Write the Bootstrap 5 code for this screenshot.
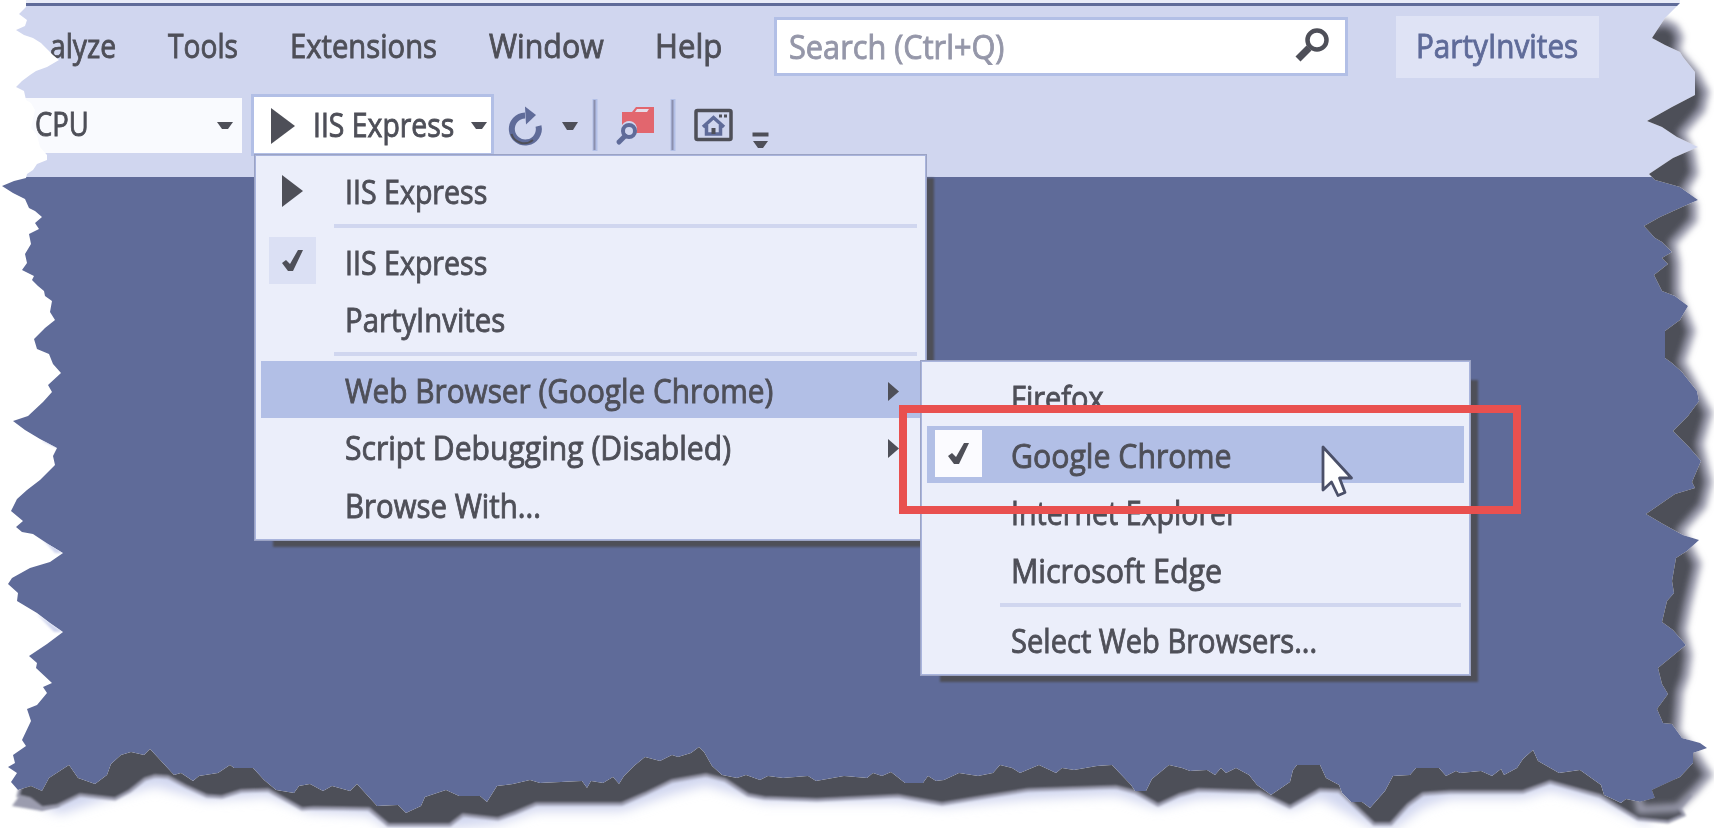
<!DOCTYPE html>
<html lang="en">
<head>
<meta charset="utf-8">
<meta name="viewport" content="width=device-width, initial-scale=1">
<title>PartyInvites</title>
<link href="https://cdn.jsdelivr.net/npm/bootstrap@5.3.0/dist/css/bootstrap.min.css" rel="stylesheet">
<style>
:root{--ink:#4e4f58;--slate:#5f6b99;--bar:#d0d6ef;--panel:#ebeefa;--hot:#b2bfe6;--red:#e9504f}
body{width:1725px;height:828px;overflow:hidden;background:var(--slate);color:var(--ink);font-family:"Open Sans","Noto Sans",sans-serif;font-size:33px;line-height:57.5px}
.fit{display:inline-block;white-space:pre;transform-origin:0 50%;flex:none;padding-top:1px;-webkit-text-stroke:.9px currentColor}
.shell{height:177px;background:var(--bar);border-top:3px solid #e9ecf8}
.shell::before{content:"";display:block;height:3px;background:var(--slate)}
.menus{height:88px;padding:10px 0 0 50px}
.menus>*{flex:none}
.searchbox{width:574px;height:59px;margin:1px 0 0 52px;border:3px solid var(--hot);background:#fff;color:#9597a9;padding-left:12px;line-height:51px}
.solution{width:203px;height:62px;margin-left:48px;padding-left:20px;background:#dfe3f5;color:var(--slate)}
.tools{height:62px}
.tools>*{flex:none}
.platform{width:242px;height:55px;margin:4px 9px 0 0;padding-left:35px;background:#f9fafe;line-height:50px}
.runbtn{width:243px;height:62px;border:3px solid var(--hot);background:#fff;line-height:54px;padding-left:59px}
.drop{width:673px;height:387px;left:254px;top:154px;z-index:2}
.sub{width:551px;height:316px;left:920px;top:360px;z-index:3}
.flyout{background:var(--panel);border:2px solid #a9b4dc;padding:6px 5px;outline:1px solid #9ba3c4;outline-offset:-1px}
.flyout .entry{height:57.5px;padding-left:84px;position:relative}
.flyout .entry.hot{background:var(--hot)}
.flyout .rule{height:4px;margin:4.5px 3px 4.5px 73px;background:var(--bar)}
.shade{background:var(--ink);z-index:1;filter:blur(1px)}
.tick{left:8px;top:4.5px;width:47px;height:47px;background:#dbe0f4}
.hot .tick{background:#fbfbff}
.over{position:absolute}
.callout{left:899px;top:405px;width:622px;height:109px;border:8px solid var(--red);z-index:5}
</style>
</head>
<body class="position-relative">
<header class="shell">
  <nav class="menus d-flex align-items-start">
    <span class="fit" data-w="66">alyze</span>
    <span class="fit" data-w="70" style="margin-left:52px">Tools</span>
    <span class="fit" data-w="147" style="margin-left:52px">Extensions</span>
    <span class="fit" data-w="115" style="margin-left:52px">Window</span>
    <span class="fit" data-w="67" style="margin-left:51px">Help</span>
    <div class="searchbox d-flex"><span class="fit" data-w="215">Search (Ctrl+Q)</span>
      <svg class="ms-auto" width="40" height="44" style="margin-right:15px" viewBox="0 0 40 44" fill="none" stroke="#4e4f58"><circle cx="27" cy="20" r="9.500" stroke-width="4.500"/><path d="M19 28L8 39" stroke-width="7"/></svg>
    </div>
    <div class="solution"><span class="fit" data-w="162">PartyInvites</span></div>
  </nav>
  <div class="tools d-flex align-items-start">
    <div class="platform d-flex"><span class="fit" data-w="54">CPU</span>
      <svg class="ms-auto" width="16" height="50" style="margin-right:9px"><path d="M0 24h16l-5 7h-6z" fill="#4e4f58"/></svg></div>
    <div class="runbtn position-relative d-flex"><svg class="over" style="left:17px;top:10px" width="24" height="38"><path d="M0 1L24 19L0 37z" fill="#4e4f58"/></svg><span class="fit" data-w="141">IIS Express</span>
      <svg class="ms-auto" width="16" height="50" style="margin-right:4px"><path d="M0 25h16l-5 7h-6z" fill="#4e4f58"/></svg></div>
    <svg width="286" height="60" viewBox="494 94 286 60" fill="none">
      <path d="M525 115.500A13.500 13.500 0 1 0 538.500 126" stroke="#5f6b99" stroke-width="6"/><path d="M525 106.500l11 8.500l-10 9.500z" fill="#5f6b99"/><path d="M511.500 134A13.500 13.500 0 0 0 533 140" stroke="#4e4f58" stroke-width="2"/>
      <path d="M562 122h16l-5 8h-6z" fill="#4e4f58"/>
      <path d="M595 99v52M673 99v52" stroke="#b2bfe6" stroke-width="5"/><path d="M594.500 100v50M672.500 100v50" stroke="#8b90ad" stroke-width="2"/>
      <path d="M622 112h10l4-5h18v26h-18a8 8 0 0 0-14-8z" fill="#e2666e"/><path d="M637 109h12l-2 3h-12z" fill="#e5dce9"/>
      <circle cx="629" cy="131" r="6" stroke="#5f6b99" stroke-width="4" fill="#d0d6ef"/><path d="M625 136l-6 6" stroke="#5f6b99" stroke-width="5" stroke-linecap="round"/>
      <rect x="696" y="110.500" width="35" height="29" rx="1.500" stroke="#4e4f58" stroke-width="3.500"/><path d="M703 127l10.500-9.500l10.500 9.500M706.500 125v9h14v-9" stroke="#5f6b99" stroke-width="3.500"/><path d="M711.500 134v-6h4v6z" fill="#4e4f58"/><path d="M719 116h3m2 0h3" stroke="#4e4f58" stroke-width="3"/>
      <path d="M752.500 132.500h16v4h-16zM753 141h15l-5 7h-5z" fill="#4e4f58"/>
    </svg>
  </div>
</header>

<div class="over shade" style="left:273px;top:178px;width:661px;height:369px"></div>
<div class="over flyout drop">
  <div class="entry"><svg class="over" style="left:21px;top:13px" width="21" height="32"><path d="M0 0L21 16L0 32z" fill="#4e4f58"/></svg><span class="fit" data-w="142">IIS Express</span></div>
  <div class="rule"></div>
  <div class="entry"><span class="over tick"><svg class="d-block" width="47" height="47" viewBox="0 0 47 47"><path d="M13 26l4-3 4 4 8-14h5L24 34h-5z" fill="#4e4f58"/></svg></span><span class="fit" data-w="142">IIS Express</span></div>
  <div class="entry"><span class="fit" data-w="160">PartyInvites</span></div>
  <div class="rule"></div>
  <div class="entry hot"><span class="fit" data-w="428">Web Browser (Google Chrome)</span><svg class="over" style="left:627px;top:21px" width="11" height="19"><path d="M0 0L11 9.500L0 19z" fill="#4e4f58"/></svg></div>
  <div class="entry"><span class="fit" data-w="386">Script Debugging (Disabled)</span><svg class="over" style="left:627px;top:21px" width="11" height="19"><path d="M0 0L11 9.500L0 19z" fill="#4e4f58"/></svg></div>
  <div class="entry"><span class="fit" data-w="196">Browse With...</span></div>
</div>

<div class="over shade" style="left:940px;top:380px;width:538px;height:302px;z-index:2"></div>
<div class="over flyout sub">
  <div class="entry"><span class="fit" data-w="93">Firefox</span></div>
  <div class="entry hot"><span class="over tick"><svg class="d-block" width="47" height="47" viewBox="0 0 47 47"><path d="M13 26l4-3 4 4 8-14h5L24 34h-5z" fill="#4e4f58"/></svg></span><span class="fit" data-w="221">Google Chrome</span></div>
  <div class="entry"><span class="fit" data-w="227">Internet Explorer</span></div>
  <div class="entry"><span class="fit" data-w="211">Microsoft Edge</span></div>
  <div class="rule"></div>
  <div class="entry"><span class="fit" data-w="306">Select Web Browsers...</span></div>
</div>
<div class="over callout"></div>
<svg class="over" style="left:1320px;top:443px;z-index:6" width="38" height="56"><path d="M3 4V47L11.500 39L18 52.500L25 49.500L19.500 35H31.500z" fill="#fff" stroke="#4b5069" stroke-width="2.800" stroke-linejoin="round"/></svg>

<!-- torn paper frame: everything outside the sheet, with its cast shadow -->
<svg class="over" style="left:0;top:0;z-index:7" width="1725" height="828">
  <defs>
    <filter id="soft" x="-5%" y="-5%" width="110%" height="110%"><feGaussianBlur stdDeviation="3"/></filter>
    <filter id="crisp" x="-5%" y="-10%" width="110%" height="120%"><feGaussianBlur stdDeviation="1.200"/></filter>
    <filter id="haze" x="-5%" y="-20%" width="110%" height="140%"><feGaussianBlur stdDeviation="6"/></filter>
    <clipPath id="outside"><path clip-rule="evenodd" d="M-5-5H1730V833H-5Z
M26-5L26 7 19 14 27 20 25 26 16 30 24 35 33 38 41 43 48 50 53 55 59 60 47 67 36 71 30 75 22 81 16 87 24 91 26 100 31 103 35 110 31 128 37 135 40 147 47 155 47 160 37 164 33 170 27 174 26 178 14 181 2 186 13 193 25 199 29 208 35 211 42 217 35 223 39 229 29 234 31 244 25 254 27 263 22 270 34 276 32 280 38 286 44 291 45 296 52 301 50 312 55 320 45 328 34 339 37 349 49 354 53 364 61 373 48 385 52 392 43 402 28 416 13 421 25 430 40 439 57 448 53 456 55 465 40 480 27 490 17 499 11 511 23 521 16 527 22 532 33 534 48 544 63 553 50 562 30 568 12 578 8 584 18 593 17 601 37 613 50 623 63 632 47 644 29 656 37 663 36 668 52 683 43 687 47 693 37 705 27 709 31 721 22 740 26 746 13 755 15 763 8 767 17 773 11 782 18 790
31 786 42 791 49 778 69 765 78 778 95 784 107 775 111 764 121 755 131 752 144 755 150 749 174 775 181 773 193 781 199 776 218 773 230 765 234 768 253 768 264 780 276 790 294 793 299 786 310 784 323 791 332 786 350 791 357 784 377 806 398 805 406 813 421 806 425 797 446 790 459 796 480 796 487 802 497 786 513 784 530 780 540 783 582 781 587 788 591 781 603 783 613 777 619 784 624 776 634 766 645 757 660 761 672 755 678 757 691 753 699 747 704 752 712 766 722 775 737 778 746 775 760 780 768 776 783 778 808 776 816 781 844 776 867 778 873 773 882 776 891 772 905 783 923 783 928 776 936 781 944 780 959 773 978 776 993 773 1000 765 1012 768 1020 773 1039 765 1056 773 1062 768 1074 770 1097 766 1112 765 1131 785 1135 791 1146 791 1152 779 1169 765 1182 768 1190 771 1207 770 1215 775 1221 768 1226 773 1236 768 1249 775 1257 785 1271 795 1290 782 1293 770 1297 765 1320 765 1326 778 1339 785 1342 793 1351 802 1362 802 1370 808 1385 791 1393 776 1410 775 1416 768 1439 768 1446 776 1456 771 1460 773 1481 771 1492 776 1501 769 1504 775 1517 768 1523 759 1533 750 1538 761 1559 773 1580 770 1601 785 1604 795 1621 803 1626 799 1640 802 1655 798 1652 790 1680 777 1693 763
1693 753 1707 748 1700 743 1682 738 1672 724 1663 723 1657 709 1668 694 1662 684 1658 668 1686 645 1673 630 1662 622 1667 601 1674 593 1672 581 1676 558 1687 551 1699 540 1683 535 1663 524 1646 514 1675 494 1695 488 1692 482 1701 461 1689 447 1673 431 1688 416 1699 401 1697 391 1682 372 1672 363 1665 358 1665 331 1680 320 1688 306 1675 296 1662 291 1654 275 1668 264 1662 258 1672 252 1662 242 1655 238 1644 226 1660 217 1680 208 1698 200 1680 187 1655 180 1649 174 1673 158 1698 147 1677 137 1662 127 1647 121 1672 107 1695 95 1695 72 1683 57 1680 52 1665 45 1652 38 1665 18 1680 3 1680-5Z"/></clipPath>
  </defs>
  <g clip-path="url(#outside)">
    <rect width="1725" height="828" fill="#fff"/>
    <path filter="url(#haze)" fill="#d0d6ef" d="M80 740L30 800 60 814 100 801 155 786 207 800 268 796 310 812 369 815 388 828H450L498 824 536 811H622L672 794 706 785 764 802 898 802 942 807 1028 799 1116 795 1158 808 1198 798 1259 797 1290 810 1320 798 1374 828H1395L1423 807 1450 798H1523L1550 790 1600 802 1650 826 1640 700Z"/>
    <path d="M54 437L57 448 42 441ZM38 534L63 553 55 553ZM36 613L63 632 54 632Z" fill="#d0d6ef" filter="url(#crisp)"/>
    <path filter="url(#crisp)" fill="#9b9cae" d="M22 792L12 806 42 811 60 806 50 790Z"/>
    <path filter="url(#crisp)" stroke="#9b9cae" stroke-width="3" fill="#4e4f58" d="M60 740L20 788 18 796 30 799 42 808 57 806 80 795 115 799 130 791 145 779 155 776 168 777 185 786 207 796 222 797 241 791 268 790 302 809 314 808 369 809 388 825H450L463 815 498 819 515 813 536 804H622L645 794 672 781 706 775 725 780 748 795 764 798 817 800 898 796 942 804 978 798 1028 790 1116 787 1135 792 1158 805 1180 795 1198 790 1259 792 1290 807 1320 790 1339 791 1374 824H1391L1408 805 1423 794 1450 792H1523L1550 782 1600 796 1638 819 1668 822 1684 815 1680 808 1690 796 1640 730Z"/>
    <path filter="url(#soft)" stroke="#9b9cae" stroke-width="7" fill="#4e4f58" d="M1630 30L1665 22 1675 27 1680 37 1677 51 1696 73 1706 92 1702 110 1682 133 1692 153 1695 173 1685 190 1694 205 1694 220 1673 243 1677 263 1677 292 1692 331 1682 362 1709 413 1700 444 1709 482 1703 506 1681 531 1698 564 1688 605 1683 630 1689 655 1686 676 1680 692 1677 732 1695 753 1709 775 1695 791 1678 808 1640 810 1620 700Z"/>
  </g>
</svg>
<script src="https://cdn.jsdelivr.net/npm/bootstrap@5.3.0/dist/js/bootstrap.bundle.min.js"></script>
<script>
// condense each label to its own width
document.querySelectorAll('.fit').forEach(function (el) {
  var w = +el.dataset.w, n = el.offsetWidth;
  el.style.transform = 'scaleX(' + w / n + ')';
  el.style.marginRight = (w - n) + 'px';
});
</script>
</body>
</html>
